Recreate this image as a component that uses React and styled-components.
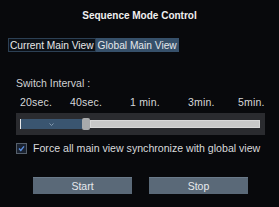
import React from 'react';
import styled, { createGlobalStyle } from 'styled-components';

const GlobalStyle = createGlobalStyle`
    html, body {
        margin: 0;
        padding: 0;
        background: #08090c;
    }
    body {
        font-family: "Liberation Sans", Arial, sans-serif;
        color: #d8dadc;
    }
`;

const Panel = styled.div`
    width: 279px;
    height: 207px;
    background: #08090c;
    display: flex;
    flex-direction: column;
    overflow: hidden;
`;

const Title = styled.div`
    margin-top: 9px;
    height: 13px;
    line-height: 13px;
    text-align: center;
    font-size: 10px;
    font-weight: bold;
    color: #f0f0f0;
`;

const Tabs = styled.div`
    display: flex;
    margin: 16px 0 0 8px;
    height: 14px;
`;

const Tab = styled.div`
    height: 14px;
    line-height: 13px;
    padding: 0 1px;
    font-size: 10.2px;
    box-sizing: border-box;
    color: ${p => (p.$active ? '#e4e8ec' : '#e8e8e8')};
    background: ${p => (p.$active ? '#36506a' : '#0c1118')};
    border: 1px solid ${p => (p.$active ? '#36506a' : '#2c4054')};
    white-space: nowrap;
`;

const Label = styled.div`
    margin: 25px 0 0 16px;
    font-size: 10.5px;
    height: 12px;
    line-height: 12px;
    color: #d0d2d4;
`;

const Ticks = styled.div`
    display: grid;
    grid-template-columns: 50px 60px 58px 50px 40px;
    margin: 7px 0 0 20px;
    height: 12px;
    line-height: 12px;
    font-size: 10.5px;
    color: #d6d8da;
    letter-spacing: 0.2px;
`;

const Tick = styled.span`
    white-space: nowrap;
`;

const SliderBox = styled.div`
    margin: 5px 0 0 16px;
    width: 249px;
    height: 22px;
    background: #2a2b2f;
    display: flex;
    align-items: center;
    padding: 0 5px 0 4px;
    box-sizing: border-box;
`;

const Filled = styled.div`
    height: 10px;
    width: 61px;
    background: #3a5570;
    border-left: 1px solid #e8e8e8;
    display: flex;
    align-items: center;
    justify-content: center;
`;

const Thumb = styled.div`
    width: 8px;
    height: 12px;
    border-radius: 2px;
    background: #a8aaac;
`;

const Rest = styled.div`
    flex: 1;
    height: 6px;
    background: #c8c8c8;
    border: 1px solid #d8d8d8;
`;

const CheckRow = styled.label`
    display: flex;
    align-items: center;
    margin: 7px 0 0 16px;
    height: 12px;
    font-size: 10.6px;
    color: #d8dadc;
    gap: 6px;
    white-space: nowrap;
`;

const Box = styled.span`
    width: 9px;
    height: 9px;
    border: 1px solid #56606c;
    background: #1a2230;
    display: flex;
    align-items: center;
    justify-content: center;
`;

const Buttons = styled.div`
    display: flex;
    margin: 23px 0 0 33px;
    gap: 17px;
`;

const Button = styled.div`
    width: 99px;
    height: 17px;
    line-height: 17px;
    text-align: center;
    background: #5a6978;
    border-top: 1px solid #6a7a8a;
    box-sizing: border-box;
    font-size: 10.5px;
    color: #e6eaee;
`;

function App() {
    return (
        <Panel>
            <GlobalStyle />
            <Title>Sequence Mode Control</Title>
            <Tabs>
                <Tab>Current Main View</Tab>
                <Tab $active>Global Main View</Tab>
            </Tabs>
            <Label>Switch Interval :</Label>
            <Ticks>
                <Tick>20sec.</Tick>
                <Tick>40sec.</Tick>
                <Tick>1 min.</Tick>
                <Tick>3min.</Tick>
                <Tick>5min.</Tick>
            </Ticks>
            <SliderBox>
                <Filled>
                    <svg width="5" height="3" viewBox="0 0 5 3">
                        <path d="M0.5 0.5 L2.5 2.5 L4.5 0.5" stroke="#8aa0b4" strokeWidth="0.9" fill="none" />
                    </svg>
                </Filled>
                <Thumb />
                <Rest />
            </SliderBox>
            <CheckRow>
                <Box>
                    <svg width="7" height="7" viewBox="0 0 7 7">
                        <path d="M1 3.6 L2.8 5.4 L6 1.4" stroke="#5a8ee0" strokeWidth="1.4" fill="none" />
                    </svg>
                </Box>
                Force all main view synchronize with global view
            </CheckRow>
            <Buttons>
                <Button>Start</Button>
                <Button>Stop</Button>
            </Buttons>
        </Panel>
    );
}

export default App;
